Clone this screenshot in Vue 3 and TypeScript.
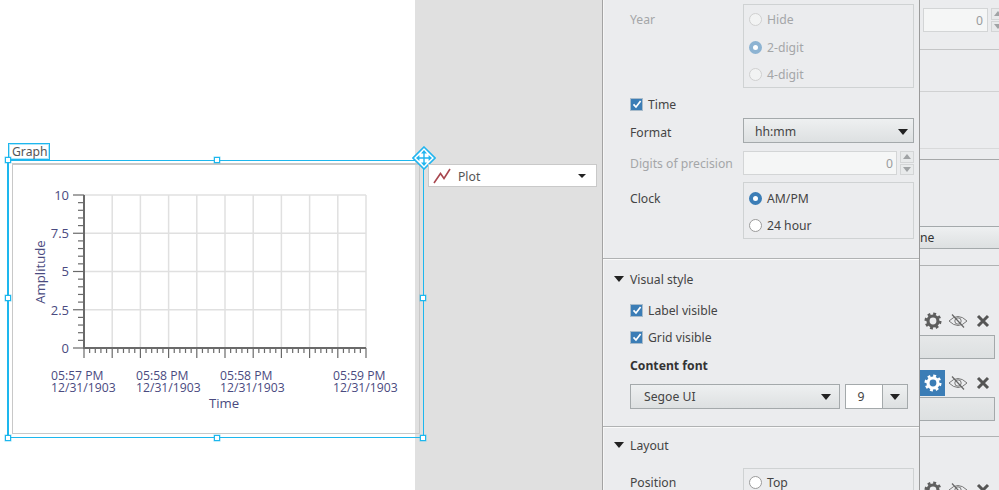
<template>
  <div class="screen">
    <!-- free canvas: graph node and its plot legend -->
    <div class="stage">
      <div class="white"></div>
      <div class="graph-label">Graph</div>
      <div class="graph">
        <div class="frame"></div>
        <svg class="chart" viewBox="8 160 416 277" width="416" height="277">
          <line v-for="x in vGrid" :key="'v' + x" :x1="x" :x2="x" y1="195" y2="348" class="grid" />
          <line v-for="y in hGrid" :key="'h' + y" x1="84" x2="366" :y1="y" :y2="y" class="grid" />
          <line v-for="t in yTicks" :key="'yt' + t.pos" :x1="t.major ? 73 : 78" x2="84" :y1="t.pos" :y2="t.pos" class="tick" />
          <line v-for="t in xTicks" :key="'xt' + t.pos" :x1="t.pos" :x2="t.pos" y1="348" :y2="t.major ? 358 : 353" class="tick" />
          <line x1="84" x2="84" y1="195" y2="349" class="axis" />
          <line x1="83" x2="366" y1="348" y2="348" class="axis" />
          <text v-for="l in yLabels" :key="l.text" x="69" :y="l.y" text-anchor="end" class="lbl num">{{ l.text }}</text>
          <g v-for="x in xLabels" :key="'lb' + x">
            <text :x="x" y="380" class="lbl">{{ x === 333 ? '05:59 PM' : x === 51 ? '05:57 PM' : '05:58 PM' }}</text>
            <text :x="x" y="392" class="lbl">12/31/1903</text>
          </g>
          <text x="224" y="408" text-anchor="middle" class="lbl title">Time</text>
          <text transform="translate(45 272) rotate(-90)" text-anchor="middle" class="lbl title">Amplitude</text>
        </svg>
        <span v-for="h in handles" :key="h" class="handle" :class="h"></span>
      </div>
      <svg class="move" viewBox="0 0 24 24" width="24" height="24">
        <path d="M12 1 23 12 12 23 1 12Z" fill="#fff" stroke="#22b5ef" stroke-width="1.6" />
        <path d="M12 5v14M5 12h14" stroke="#22b5ef" stroke-width="1.4" fill="none" />
        <path d="M12 4l3 3.4H9ZM12 20l3-3.4H9ZM4 12l3.4-3v6ZM20 12l-3.4-3v6Z" fill="#22b5ef" />
      </svg>
      <div class="plot">
        <svg viewBox="0 0 18 16" width="18" height="16">
          <path d="M1 15 7.5 5.5l3.5 5L17 1" fill="none" stroke="#a8474f" stroke-width="1.6" />
        </svg>
        <span class="plot-name">Plot</span>
        <i class="arrow small"></i>
      </div>
    </div>

    <!-- properties panel -->
    <div class="panel">
      <div class="row first disabled">
        <span class="row-label">Year</span>
        <div class="box tight">
          <label class="radio"><i class="dot"></i>Hide</label>
          <label class="radio"><i class="dot on"></i>2-digit</label>
          <label class="radio"><i class="dot"></i>4-digit</label>
        </div>
      </div>
      <label class="check time"><i class="tick-box"><svg viewBox="0 0 12 12" width="12" height="12"><path d="M2.5 6.3 5 9l4.6-6" /></svg></i>Time</label>
      <div class="row format">
        <span class="row-label">Format</span>
        <div class="select"><span>hh:mm</span><i class="arrow"></i></div>
      </div>
      <div class="row digits disabled">
        <span class="row-label">Digits of precision</span>
        <div class="number-wrap">
          <div class="number">0</div>
          <div class="spin"><b><i class="up"></i></b><b><i class="down"></i></b></div>
        </div>
      </div>
      <div class="row clock">
        <span class="row-label">Clock</span>
        <div class="box">
          <label class="radio"><i class="dot on"></i>AM/PM</label>
          <label class="radio"><i class="dot"></i>24 hour</label>
        </div>
      </div>

      <div class="divider visual-top"></div>
      <div class="head visual-head"><i class="arrow"></i>Visual style</div>
      <label class="check label-vis"><i class="tick-box"><svg viewBox="0 0 12 12" width="12" height="12"><path d="M2.5 6.3 5 9l4.6-6" /></svg></i>Label visible</label>
      <label class="check grid-vis"><i class="tick-box"><svg viewBox="0 0 12 12" width="12" height="12"><path d="M2.5 6.3 5 9l4.6-6" /></svg></i>Grid visible</label>
      <div class="font-title">Content font</div>
      <div class="font-row">
        <div class="select font-name"><span>Segoe UI</span><i class="arrow"></i></div>
        <div class="font-size"><span class="size-val">9</span><span class="size-btn"><i class="arrow"></i></span></div>
      </div>

      <div class="divider layout-top"></div>
      <div class="head layout-head"><i class="arrow"></i>Layout</div>
      <div class="row position">
        <span class="row-label">Position</span>
        <div class="box">
          <label class="radio"><i class="dot"></i>Top</label>
        </div>
      </div>
    </div>

    <!-- right hand column, cut off by the screenshot -->
    <div class="side">
      <div class="s-block s1">
        <div class="number s-num">0</div>
        <div class="spin s-spin"><b><i class="up"></i></b><b><i class="down"></i></b></div>
      </div>
      <div class="s-block s2"></div>
      <div class="s-block s3"></div>
      <div class="s-block s4"></div>
      <div class="s-select">ne</div>
      <div class="s-line"></div>
      <template v-for="(r, i) in sideRows" :key="i">
        <div class="tools" :class="r">
          <span class="gear" :class="{ active: r === 'r2' }">
            <svg viewBox="0 0 18 18" width="18" height="18">
              <circle cx="9" cy="9" r="5" fill="none" stroke="currentColor" stroke-width="3.2" />
              <circle cx="9" cy="9" r="7.3" fill="none" stroke="currentColor" stroke-width="2.4" stroke-dasharray="2.87 2.86" />
            </svg>
          </span>
          <svg class="eye" viewBox="0 0 20 16" width="20" height="16">
            <path d="M1 8Q10-1 19 8 10 17 1 8Z" fill="none" stroke="#777" stroke-width="1" />
            <circle cx="10" cy="8" r="3.2" fill="none" stroke="#777" stroke-width="1" />
            <path d="M4 1.5 16 14.5" stroke="#666" stroke-width="1.2" />
          </svg>
          <svg class="close" viewBox="0 0 14 14" width="14" height="14">
            <path d="M2 2 12 12M12 2 2 12" stroke="#555" stroke-width="3" />
          </svg>
        </div>
        <div v-if="r !== 'r3'" class="s-btn"></div>
        <div v-if="r === 'r2'" class="s-line after-btn"></div>
      </template>
    </div>
  </div>
</template>

<script setup lang="ts">
interface Tick {
  pos: number
  major: boolean
}

const left = 84
const top = 195
const stepX = 28.2
const stepY = 38.25

const vGrid = Array.from({ length: 11 }, (_, i) => left + i * stepX)
const hGrid = Array.from({ length: 5 }, (_, i) => top + i * stepY)

const yTicks: Tick[] = Array.from({ length: 21 }, (_, i) => ({
  pos: top + (i * stepY) / 5,
  major: i % 5 === 0
}))
const xTicks: Tick[] = Array.from({ length: 51 }, (_, i) => ({
  pos: left + (i * stepX) / 5,
  major: i % 5 === 0
}))

const yLabels = [
  { text: '10', y: 200 },
  { text: '7.5', y: 238 },
  { text: '5', y: 276 },
  { text: '2.5', y: 315 },
  { text: '0', y: 353 }
]
const xLabels = [51, 136, 220, 333]
const handles = ['tl', 'tc', 'ml', 'mr', 'bl', 'bc', 'br']
const sideRows = ['r1', 'r2', 'r3']
</script>

<style>
html,
body {
  margin: 0;
  background: #e0e0e0;
}
</style>

<style scoped>
.screen {
  display: flex;
  width: 999px;
  height: 490px;
  overflow: hidden;
  font-family: "Noto Sans", "Open Sans", sans-serif;
  font-size: 12.2px;
  color: #444;
  background: #e0e0e0;
}

/* canvas */
.stage {
  position: relative;
  flex: 0 0 602px;
}
.white {
  position: absolute;
  left: 0;
  top: 0;
  width: 415px;
  height: 490px;
  background: #fff;
}
.graph-label {
  position: absolute;
  left: 8px;
  top: 143px;
  width: 42px;
  height: 17px;
  box-sizing: border-box;
  border: 1px solid #1db7ee;
  box-shadow: inset 0 0 0 1px rgba(29, 183, 238, 0.35);
  padding-left: 3px;
  line-height: 15px;
  color: #555;
}
.graph {
  position: absolute;
  left: 7px;
  top: 160px;
  width: 417px;
  height: 278px;
  box-sizing: border-box;
  border: 1px solid #1db7ee;
  border-left-width: 2px;
}
.frame {
  position: absolute;
  left: 3px;
  top: 2px;
  right: 3px;
  bottom: 3px;
  border: 2px solid #c8c8c8;
  border-width: 2px 1px 1px 1px;
}
.chart {
  position: absolute;
  left: -1px;
  top: -1px;
}
.grid {
  stroke: #e0e0e0;
  stroke-width: 1.5;
}
.tick {
  stroke: #6a6a6a;
  stroke-width: 1.2;
}
.axis {
  stroke: #6a6a6a;
  stroke-width: 2;
}
.lbl {
  font-family: "Open Sans", "Noto Sans", sans-serif;
  font-size: 12.2px;
  fill: #4a4a80;
}
.num {
  font-size: 13px;
}
.title {
  font-size: 13.2px;
}
.handle {
  position: absolute;
  width: 4px;
  height: 4px;
  background: #fff;
  border: 1px solid #1db7ee;
  box-shadow: 0 0 0 0.5px rgba(29, 183, 238, 0.5);
}
.tl { left: -4px; top: -4px; }
.tc { left: 205px; top: -4px; }
.ml { left: -4px; top: 134px; }
.mr { right: -3px; top: 134px; }
.bl { left: -4px; bottom: -4px; }
.bc { left: 205px; bottom: -4px; }
.br { right: -3px; bottom: -4px; }
.move {
  position: absolute;
  left: 412px;
  top: 146px;
}
.plot {
  position: absolute;
  left: 428px;
  top: 164px;
  width: 169px;
  height: 23px;
  box-sizing: border-box;
  display: flex;
  align-items: center;
  padding: 1px 10px 0 4px;
  background: #fff;
  border: 1px solid #c9c9c9;
  color: #555;
}
.plot-name {
  margin-left: 7px;
  flex: 1;
}

/* shared controls */
.arrow {
  display: block;
  width: 0;
  height: 0;
  border-left: 5px solid transparent;
  border-right: 5px solid transparent;
  border-top: 6px solid #222;
}
.arrow.small {
  border-left-width: 4px;
  border-right-width: 4px;
  border-top-width: 4px;
}
.panel {
  flex: 0 0 318px;
  height: 490px;
  box-sizing: border-box;
  padding-top: 4px;
  background: #ebecee;
  border-left: 1px solid #a3a3a3;
  border-right: 1px solid #9a9a9a;
  box-shadow: inset 1px 0 #f6f6f6;
}
.row {
  display: grid;
  grid-template-columns: 113px 171px;
  margin-left: 27px;
  align-items: start;
}
.row-label {
  line-height: 31px;
}
.disabled,
.disabled .radio {
  color: #a4a6a8;
}
.box {
  box-sizing: border-box;
  border: 1px solid #cfd2d3;
  padding: 1.5px 0 0 5px;
}
.radio {
  display: flex;
  align-items: center;
  height: 27.4px;
}
.box.tight {
  height: 84px;
  padding-top: 1px;
}
.dot {
  box-sizing: border-box;
  width: 13px;
  height: 13px;
  margin-right: 5px;
  border: 1px solid #9b9b9b;
  border-radius: 50%;
  background: #fff;
}
.disabled .dot {
  border-color: #d0d0d0;
  background: #f2f3f3;
}
.dot.on {
  border: 4px solid #3b7db6;
  background: #fff;
}
.disabled .dot.on {
  border-color: #8db3d2;
}
.check {
  display: flex;
  align-items: center;
  height: 20px;
  margin-left: 27px;
}
.tick-box {
  box-sizing: border-box;
  width: 13px;
  height: 13px;
  margin-right: 5px;
  background: #3b7db6;
  border: 1px solid #a9bccb;
  display: flex;
  align-items: center;
  justify-content: center;
}
.tick-box svg {
  flex: none;
}
.tick-box path {
  fill: none;
  stroke: #fff;
  stroke-width: 1.7;
}
.time { margin-top: 6px; }
.select {
  box-sizing: border-box;
  height: 25px;
  display: flex;
  align-items: center;
  justify-content: space-between;
  padding: 0 5px 0 11px;
  border: 1px solid #a4a9ab;
  background: linear-gradient(#eef0f1, #dde0e1);
}
.format {
  margin-top: 4px;
  height: 25px;
}
.format .row-label {
  line-height: 29px;
}
.format .select {
  padding-top: 2px;
}
.digits {
  margin-top: 8px;
  height: 24px;
}
.digits .row-label {
  line-height: 26px;
}
.number-wrap {
  display: flex;
  justify-content: space-between;
}
.number {
  box-sizing: border-box;
  width: 154px;
  height: 24px;
  line-height: 24px;
  text-align: right;
  padding-right: 3px;
  border: 1px solid #d3d5d6;
  background: #f5f6f6;
  color: #9a9c9e;
}
.spin {
  display: flex;
  flex-direction: column;
  gap: 1px;
  width: 14px;
  height: 24px;
}
.spin b {
  flex: 1;
  box-sizing: border-box;
  border: 1px solid #d3d5d6;
  background: #e8eaeb;
  display: flex;
  align-items: center;
  justify-content: center;
}
.up,
.down {
  width: 0;
  height: 0;
  border-left: 4px solid transparent;
  border-right: 4px solid transparent;
}
.up { border-bottom: 5px solid #a0a3a5; }
.down { border-top: 5px solid #a0a3a5; }
.clock {
  margin-top: 7px;
}
.clock .row-label {
  line-height: 33px;
}
.clock .box {
  height: 57px;
  color: #444;
}
.divider {
  height: 1px;
  background: #b0b2b3;
  border-bottom: 1px solid #fafafa;
}
.visual-top { margin-top: 19px; }
.head {
  display: flex;
  align-items: center;
  height: 20px;
  margin-left: 11px;
}
.visual-head { margin-top: 9px; }
.layout-head { margin-top: 7px; }
.head .arrow {
  margin-right: 6px;
}
.label-vis { margin-top: 11px; }
.grid-vis { margin-top: 7px; }
.font-title {
  margin: 10px 0 0 27px;
  height: 18px;
  line-height: 18px;
  font-weight: 700;
  color: #333;
}
.font-row {
  display: flex;
  margin: 9px 0 0 27px;
}
.font-name {
  width: 210px;
  padding: 0 8px 0 13px;
}
.font-size {
  display: flex;
  height: 25px;
  width: 63px;
  box-sizing: border-box;
  margin-left: 5px;
  border: 1px solid #a4a9ab;
}
.size-val {
  width: 36px;
  box-sizing: border-box;
  padding-right: 6px;
  text-align: center;
  line-height: 23px;
  background: #fff;
}
.size-btn {
  flex: 1;
  display: flex;
  align-items: center;
  justify-content: center;
  border-left: 1px solid #a4a9ab;
  background: linear-gradient(#eef0f1, #dde0e1);
}
.layout-top { margin-top: 17px; }
.position {
  margin-top: 13px;
}
.position .row-label {
  line-height: 29px;
}
.position .box {
  height: 40px;
  padding-top: 0;
}

/* right column */
.side {
  flex: 1;
  min-width: 0;
  height: 490px;
  overflow: hidden;
  background: #ebecee;
}
.s-block {
  box-sizing: border-box;
  border-bottom: 1px solid #d0d1d2;
}
.s1 {
  height: 50px;
  padding: 8px 0 0 3px;
  display: flex;
  gap: 3px;
  border-bottom-color: #c4c5c6;
}
.s-num {
  width: 65px;
  flex: none;
  padding-right: 4px;
}
.s-spin {
  width: 14px;
  flex: none;
}
.s2 { height: 42px; }
.s3 {
  height: 57px;
  border-bottom: 1px solid #d8d9da;
}
.s4 {
  height: 11px;
  border-bottom: 1px solid #a6a8a9;
}
.s-select {
  margin-top: 66px;
  height: 23px;
  box-sizing: border-box;
  line-height: 22px;
  border: solid #a4a9ab;
  border-width: 1px 0;
  background: linear-gradient(#eef0f1, #dde0e1);
  color: #333;
}
.s-line {
  margin-top: 16px;
  height: 1px;
  background: #b0b2b3;
}
.tools {
  display: flex;
  align-items: center;
  height: 26px;
  color: #5e5e5e;
}
.r1 { margin-top: 42px; }
.r2 { margin-top: 11px; }
.r3 { margin-top: 40px; }
.gear {
  flex: none;
  width: 25px;
  height: 26px;
  display: flex;
  align-items: center;
  justify-content: center;
}
.gear.active {
  background: #3b7db6;
  color: #fff;
}
.eye { margin-left: 3px; flex: none; }
.close { margin-left: 8px; flex: none; }
.s-btn {
  width: 75px;
  height: 24px;
  margin-top: 1px;
  box-sizing: border-box;
  border: 1px solid #a4a9ab;
  border-left: 0;
  background: linear-gradient(#e6e8e9, #dde0e1);
}
.after-btn { margin-top: 15px; }
</style>
